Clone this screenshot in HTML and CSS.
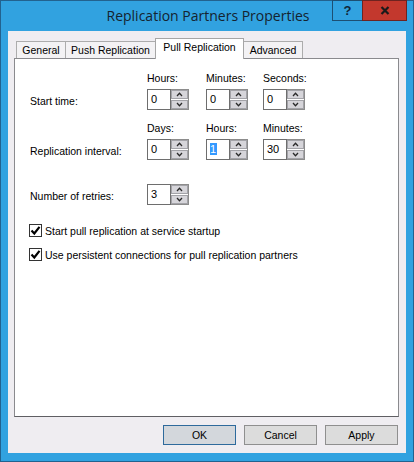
FILE: index.html
```html
<!DOCTYPE html>
<html>
<head>
<meta charset="utf-8">
<link rel="stylesheet" href="styles.css">
</head>
<body>
<div class="window">
  <div class="titlebar">
    <div class="title">Replication Partners Properties</div>
    <div class="caption-btns">
      <div class="cbtn help">?</div>
      <div class="cbtn close">
        <svg width="10" height="9" viewBox="0 0 10 9"><path d="M1.5 1 L8.5 8 M8.5 1 L1.5 8" stroke="#1a1a1a" stroke-width="2.2" fill="none"/></svg>
      </div>
    </div>
  </div>
  <div class="client">
    <div class="tabs">
      <div class="tab w-general">General</div>
      <div class="tab w-push">Push Replication</div>
      <div class="tab active w-pull">Pull Replication</div>
      <div class="tab w-adv">Advanced</div>
    </div>
    <div class="panel">
      <div class="time-grid">
        <span></span>
        <span class="hdr">Hours:</span>
        <span class="hdr">Minutes:</span>
        <span class="hdr">Seconds:</span>

        <span class="rowlabel">Start time:</span>
        <div class="spin"><div class="spin-input">0</div><div class="spin-btns"><div class="sb"><svg width="7" height="5" viewBox="0 0 7 5"><path d="M1 4 L3.5 1.3 L6 4" stroke="#2a2a2a" stroke-width="1.3" fill="none"/></svg></div><div class="sb"><svg width="7" height="5" viewBox="0 0 7 5"><path d="M1 1 L3.5 3.7 L6 1" stroke="#2a2a2a" stroke-width="1.3" fill="none"/></svg></div></div></div>
        <div class="spin"><div class="spin-input">0</div><div class="spin-btns"><div class="sb"><svg width="7" height="5" viewBox="0 0 7 5"><path d="M1 4 L3.5 1.3 L6 4" stroke="#2a2a2a" stroke-width="1.3" fill="none"/></svg></div><div class="sb"><svg width="7" height="5" viewBox="0 0 7 5"><path d="M1 1 L3.5 3.7 L6 1" stroke="#2a2a2a" stroke-width="1.3" fill="none"/></svg></div></div></div>
        <div class="spin"><div class="spin-input">0</div><div class="spin-btns"><div class="sb"><svg width="7" height="5" viewBox="0 0 7 5"><path d="M1 4 L3.5 1.3 L6 4" stroke="#2a2a2a" stroke-width="1.3" fill="none"/></svg></div><div class="sb"><svg width="7" height="5" viewBox="0 0 7 5"><path d="M1 1 L3.5 3.7 L6 1" stroke="#2a2a2a" stroke-width="1.3" fill="none"/></svg></div></div></div>

        <span></span>
        <span class="hdr">Days:</span>
        <span class="hdr">Hours:</span>
        <span class="hdr">Minutes:</span>

        <span class="rowlabel">Replication interval:</span>
        <div class="spin"><div class="spin-input">0</div><div class="spin-btns"><div class="sb"><svg width="7" height="5" viewBox="0 0 7 5"><path d="M1 4 L3.5 1.3 L6 4" stroke="#2a2a2a" stroke-width="1.3" fill="none"/></svg></div><div class="sb"><svg width="7" height="5" viewBox="0 0 7 5"><path d="M1 1 L3.5 3.7 L6 1" stroke="#2a2a2a" stroke-width="1.3" fill="none"/></svg></div></div></div>
        <div class="spin"><div class="spin-input"><span class="sel">1</span></div><div class="spin-btns"><div class="sb"><svg width="7" height="5" viewBox="0 0 7 5"><path d="M1 4 L3.5 1.3 L6 4" stroke="#2a2a2a" stroke-width="1.3" fill="none"/></svg></div><div class="sb"><svg width="7" height="5" viewBox="0 0 7 5"><path d="M1 1 L3.5 3.7 L6 1" stroke="#2a2a2a" stroke-width="1.3" fill="none"/></svg></div></div></div>
        <div class="spin"><div class="spin-input">30</div><div class="spin-btns"><div class="sb"><svg width="7" height="5" viewBox="0 0 7 5"><path d="M1 4 L3.5 1.3 L6 4" stroke="#2a2a2a" stroke-width="1.3" fill="none"/></svg></div><div class="sb"><svg width="7" height="5" viewBox="0 0 7 5"><path d="M1 1 L3.5 3.7 L6 1" stroke="#2a2a2a" stroke-width="1.3" fill="none"/></svg></div></div></div>
      </div>

      <div class="retries">
        <span class="rowlabel">Number of retries:</span>
        <div class="spin"><div class="spin-input">3</div><div class="spin-btns"><div class="sb"><svg width="7" height="5" viewBox="0 0 7 5"><path d="M1 4 L3.5 1.3 L6 4" stroke="#2a2a2a" stroke-width="1.3" fill="none"/></svg></div><div class="sb"><svg width="7" height="5" viewBox="0 0 7 5"><path d="M1 1 L3.5 3.7 L6 1" stroke="#2a2a2a" stroke-width="1.3" fill="none"/></svg></div></div></div>
      </div>

      <div class="checks">
        <div class="check">
          <span class="box"><svg width="11" height="11" viewBox="0 0 11 11"><path d="M1.5 5.5 L4.3 8.5 L9.5 1.8" stroke="#000" stroke-width="2.2" fill="none"/></svg></span>
          <span>Start pull replication at service startup</span>
        </div>
        <div class="check">
          <span class="box"><svg width="11" height="11" viewBox="0 0 11 11"><path d="M1.5 5.5 L4.3 8.5 L9.5 1.8" stroke="#000" stroke-width="2.2" fill="none"/></svg></span>
          <span>Use persistent connections for pull replication partners</span>
        </div>
      </div>
    </div>
    <div class="buttons">
      <div class="btn default">OK</div>
      <div class="btn">Cancel</div>
      <div class="btn">Apply</div>
    </div>
  </div>
</div>
</body>
</html>
```

FILE: styles.css
```css
* { box-sizing: border-box; }
html, body { margin: 0; padding: 0; }
body {
  width: 414px;
  height: 462px;
  overflow: hidden;
  font-family: "Liberation Sans", Arial, sans-serif;
  font-size: 10.5px;
  color: #000;
}
.window {
  width: 414px;
  height: 462px;
  background: #31a2e0;
  border: 1px solid #22628f;
  display: flex;
  flex-direction: column;
}
.titlebar {
  height: 30px;
  display: grid;
  flex: none;
}
.title {
  grid-area: 1 / 1;
  justify-self: center;
  align-self: start;
  margin-top: 5px;
  font-family: "Open Sans", "Liberation Sans", sans-serif;
  font-size: 14px;
  line-height: 20px;
  color: #15232f;
  padding-left: 2px;
}
.caption-btns {
  grid-area: 1 / 1;
  justify-self: end;
  align-self: start;
  display: flex;
  margin-right: 6px;
  margin-top: -1px;
}
.cbtn {
  height: 21px;
  display: flex;
  align-items: center;
  justify-content: center;
  border: 1px solid #1d4f73;
}
.help {
  width: 30px;
  background: #31a2e0;
  font-family: "Liberation Sans", Arial, sans-serif;
  font-weight: bold;
  font-size: 13px;
  color: #10263a;
  border-right: none;
}
.close {
  width: 45px;
  background: #c3382d;
  border-color: #6e2320;
}
.client {
  flex: 1;
  margin: 0 7px 8px 7px;
  background: #efedf1;
  padding: 7px 7px 8px 6px;
  display: flex;
  flex-direction: column;
}
.tabs {
  height: 20px;
  display: flex;
  align-items: flex-end;
  padding-left: 2px;
  flex: none;
}
.tab {
  height: 17px;
  border: 1px solid #acacac;
  border-bottom: none;
  background: #f3f2f4;
  margin-right: -1px;
  text-align: center;
  line-height: 14px;
  padding-top: 1px;
  white-space: nowrap;
}
.tab.active {
  height: 21px;
  margin-bottom: -1px;
  background: #fff;
  position: relative;
  z-index: 1;
  border-color: #a6a6a6;
}
.w-general { width: 50px; }
.w-push { width: 91px; }
.w-pull { width: 89px; }
.w-adv { width: 60px; }
.panel {
  flex: 1;
  background: #fff;
  border: 1px solid #8a8a8e;
  border-bottom-color: #5f5f63;
  padding: 12px 0 0 15px;
}
.time-grid {
  display: grid;
  grid-template-columns: 117px 59px 57px 42px;
  grid-template-rows: 14px 21px 21px 21px;
  row-gap: 4px;
}
.hdr {
  align-self: end;
  line-height: 14px;
}
.rowlabel {
  align-self: center;
  line-height: 14px;
  padding-top: 3px;
}
.spin {
  display: flex;
  width: 42px;
  height: 21px;
}
.spin-input {
  width: 24px;
  height: 21px;
  border: 1px solid #6e6e6e;
  background: #fff;
  padding-left: 3px;
  line-height: 19px;
  font-size: 11px;
}
.sel {
  background: #3399ff;
  color: #fff;
  padding: 0 1px 0 0;
  display: inline-block;
  line-height: 12px;
}
.spin-btns {
  width: 18px;
  height: 21px;
  display: flex;
  flex-direction: column;
  border: 1px solid #8c8c8c;
  border-left: none;
  background: #fff;
  gap: 1px;
}
.sb {
  flex: 1;
  background: #d6d5da;
  border: 1px solid #a3a3a8;
  display: flex;
  align-items: center;
  justify-content: center;
}
.retries {
  display: grid;
  grid-template-columns: 117px 42px;
  margin-top: 24px;
}
.checks {
  margin-top: 19px;
  display: flex;
  flex-direction: column;
  gap: 11px;
}
.check {
  display: flex;
  align-items: center;
  gap: 3px;
  height: 13px;
  line-height: 14px;
}
.box {
  width: 13px;
  height: 13px;
  border: 1px solid #333;
  background: #fff;
  display: flex;
  align-items: center;
  justify-content: center;
  margin-left: -1px;
}
.buttons {
  flex: none;
  display: flex;
  justify-content: flex-end;
  gap: 8px;
  margin-top: 8px;
  padding-right: 1px;
}
.btn {
  width: 73px;
  height: 20px;
  border: 1px solid #8f8f8f;
  background: #dcdcdc;
  text-align: center;
  line-height: 18px;
}
.btn.default {
  border-color: #2e6a9c;
  background: #d3d7dc;
}
```
